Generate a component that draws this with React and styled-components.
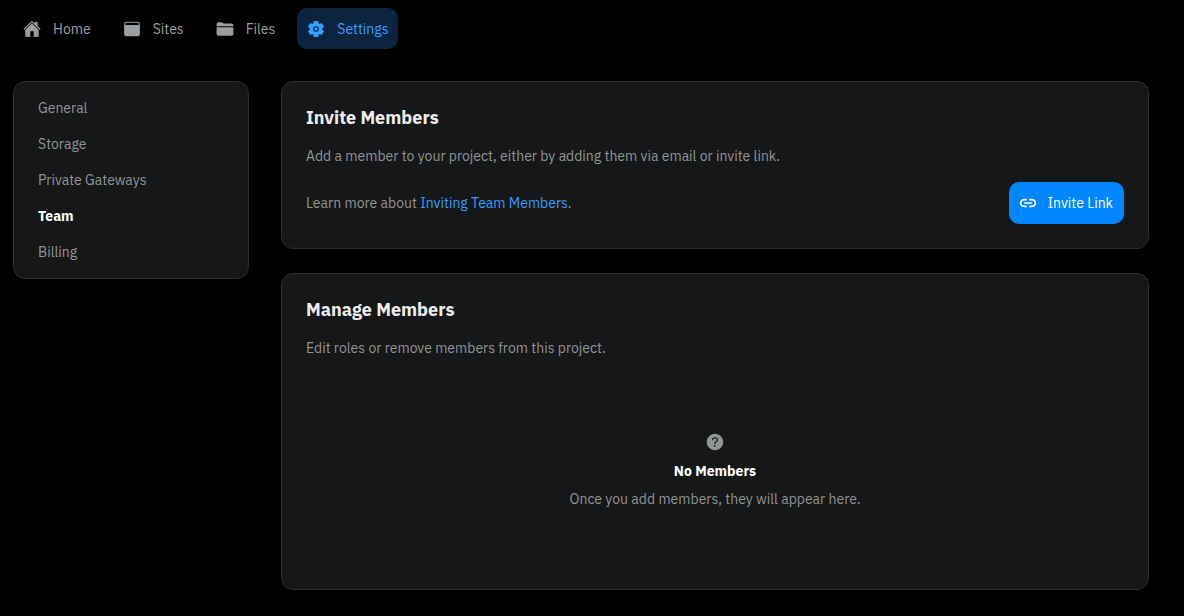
import React from "react";
import styled, { createGlobalStyle } from "styled-components";
import {
  IoHome,
  IoBrowsers,
  IoFolder,
  IoSettings,
  IoLink,
  IoHelpCircle,
} from "react-icons/io5";

const GlobalStyle = createGlobalStyle`
  * { box-sizing: border-box; }
  body {
    margin: 0;
    background: #000;
    color: #929596;
    font-family: "IBM Plex Sans", Roboto, "Liberation Sans", sans-serif;
    font-size: 14px;
    line-height: 20px;
  }
  h1, h2, h3, p, ul { margin: 0; padding: 0; }
`;

const TopNav = styled.nav`
  display: flex;
  gap: 12px;
  padding: 8px 13px 0;
`;

const TopLink = styled.a`
  display: flex;
  align-items: center;
  gap: 12px;
  height: 41px;
  padding: 0 10px;
  border-radius: 10px;
  text-decoration: none;
  color: ${(p) => (p.$active ? "#369eff" : "#9b9ea0")};
  background: ${(p) => (p.$active ? "#0c2440" : "transparent")};

  svg {
    width: 18px;
    height: 18px;
  }
`;

const Layout = styled.div`
  display: flex;
  align-items: flex-start;
  gap: 32px;
  padding: 32px 35px 26px 13px;
`;

const Panel = styled.section`
  background: #151718;
  border: 1px solid #2b2d2e;
  border-radius: 12px;
`;

const Sidebar = styled(Panel).attrs({ as: "nav" })`
  flex: 0 0 236px;
  padding: 8px 24px;
`;

const SideLink = styled.a`
  display: block;
  line-height: 36px;
  text-decoration: none;
  color: ${(p) => (p.$active ? "#fff" : "#929596")};
  font-weight: ${(p) => (p.$active ? 700 : 400)};
`;

const Content = styled.main`
  flex: 1;
  min-width: 0;
  display: flex;
  flex-direction: column;
  gap: 24px;
`;

const Card = styled(Panel)`
  display: flex;
  flex-direction: column;
  gap: 16px;
  padding: 24px;
`;

const CardTitle = styled.h2`
  font-size: 18px;
  line-height: 24px;
  font-weight: 700;
  color: #ededed;
`;

const CardFooter = styled.div`
  display: flex;
  align-items: center;
  justify-content: space-between;
  gap: 16px;
`;

const TextLink = styled.a`
  color: #369eff;
  text-decoration: none;
`;

const PrimaryButton = styled.button`
  display: flex;
  align-items: center;
  gap: 10px;
  height: 42px;
  padding: 0 11px 0 10px;
  border: 0;
  border-radius: 10px;
  background: #0086ff;
  color: #fff;
  font: inherit;
  cursor: pointer;

  svg {
    width: 18px;
    height: 18px;
  }
`;

const EmptyState = styled.div`
  display: flex;
  flex-direction: column;
  align-items: center;
  gap: 8px;
  padding: 57px 0 56px;
  text-align: center;

  svg {
    width: 22px;
    height: 22px;
  }
`;

const EmptyTitle = styled.h3`
  font-size: 14px;
  line-height: 20px;
  font-weight: 700;
  color: #fff;
`;

const topItems = [
  { label: "Home", Icon: IoHome },
  { label: "Sites", Icon: IoBrowsers },
  { label: "Files", Icon: IoFolder },
  { label: "Settings", Icon: IoSettings, active: true },
];

const sideItems = ["General", "Storage", "Private Gateways", "Team", "Billing"];

export default function App() {
  return (
    <>
      <GlobalStyle />
      <TopNav aria-label="Main">
        {topItems.map(({ label, Icon, active }) => (
          <TopLink key={label} href="#" $active={active}>
            <Icon aria-hidden="true" />
            {label}
          </TopLink>
        ))}
      </TopNav>
      <Layout>
        <Sidebar aria-label="Settings">
          {sideItems.map((label) => (
            <SideLink key={label} href="#" $active={label === "Team"}>
              {label}
            </SideLink>
          ))}
        </Sidebar>
        <Content>
          <Card>
            <CardTitle>Invite Members</CardTitle>
            <p>
              Add a member to your project, either by adding them via email or
              invite link.
            </p>
            <CardFooter>
              <p>
                Learn more about{" "}
                <TextLink href="#">Inviting Team Members</TextLink>.
              </p>
              <PrimaryButton type="button">
                <IoLink aria-hidden="true" />
                Invite Link
              </PrimaryButton>
            </CardFooter>
          </Card>
          <Card>
            <CardTitle>Manage Members</CardTitle>
            <p>Edit roles or remove members from this project.</p>
            <EmptyState>
              <IoHelpCircle aria-hidden="true" />
              <EmptyTitle>No Members</EmptyTitle>
              <p>Once you add members, they will appear here.</p>
            </EmptyState>
          </Card>
        </Content>
      </Layout>
    </>
  );
}
